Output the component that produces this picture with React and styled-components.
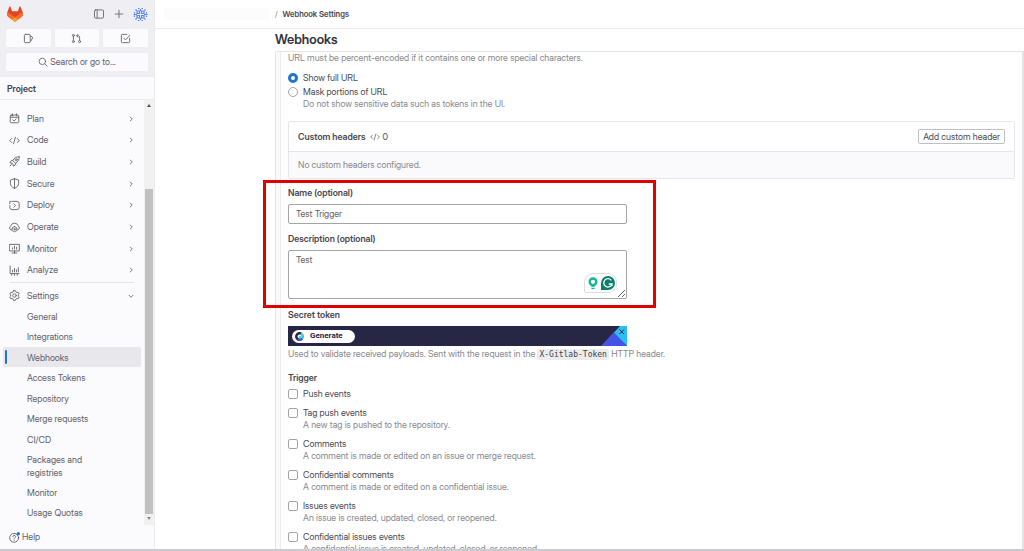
import React, { useState } from 'react'
import styled, { createGlobalStyle } from 'styled-components'

const GlobalStyle = createGlobalStyle`
  *, *::before, *::after { box-sizing: border-box; }
  body {
    margin: 0;
    background: #fff;
    color: #4a494f;
    font-family: 'Inter Display', Roboto, 'Liberation Sans', sans-serif;
    font-size: 9px;
    line-height: 12px;
  }
  button, input, textarea { font: inherit; color: inherit; }
  h1, h2, ul, p, fieldset { margin: 0; padding: 0; border: 0; }
  ul { list-style: none; }
  a { color: inherit; text-decoration: none; }
`

const Page = styled.div`
  display: flex;
  height: 100vh;
  overflow: hidden;
  border-bottom: 2px solid #c9cbd1;
`

/* sidebar */
const Sidebar = styled.aside`
  display: flex;
  flex-direction: column;
  flex: 0 0 155px;
  background: #fbfafd;
  border-right: 1px solid #ececef;
  color: #626168;
`
const SidebarTop = styled.div`
  display: flex;
  flex-direction: column;
  gap: 6px;
  padding: 5px 6px 6px;
  background: #efeef2;
`
const BrandRow = styled.div`
  display: flex;
  align-items: center;
  gap: 8px;
  height: 18px;
  a { display: flex; margin-right: auto; padding-left: 1px; }
`
const IconButton = styled.button`
  display: flex;
  padding: 0;
  border: 0;
  background: none;
  color: #737278;
`
const Shortcuts = styled.div`
  display: grid;
  grid-template-columns: repeat(3, 1fr);
  gap: 4px;
`
const SoftButton = styled.button`
  display: flex;
  align-items: center;
  justify-content: center;
  gap: 2px;
  height: 18px;
  padding: 0;
  border: 0;
  border-radius: 2px;
  background: #fbfafd;
  color: #626168;
`
const ProjectTitle = styled.h2`
  padding: 6px 7px 4px;
  border-bottom: 1px solid #ececef;
  font-size: 9px;
  font-weight: 600;
  line-height: 12px;
  color: #434248;
`
const NavScroll = styled.div`
  display: flex;
  flex: 1;
  min-height: 0;
`
const Nav = styled.nav`
  display: flex;
  flex-direction: column;
  flex: 1;
  padding: 8px 3px 2px 2px;
`
const Menu = styled.ul`
  display: flex;
  flex-direction: column;
  justify-content: space-between;
  height: 173px;
`
const MenuLink = styled.a`
  display: flex;
  align-items: center;
  gap: 7px;
  height: 21px;
  padding: 0 6px 0 7px;
  span { flex: 1; }
`
const Divider = styled.hr`
  width: calc(100% - 15px);
  margin: 1px auto 2px;
  border: 0;
  border-top: 1px solid #e4e3e8;
`
const SubMenu = styled.ul`
  display: flex;
  flex-direction: column;
  flex: 1;
  justify-content: space-between;
`
const SubLink = styled.a`
  display: flex;
  align-items: center;
  gap: 20px;
  min-height: 20px;
  padding: 3px 30px 3px 2px;
  margin-left: 1px;
  border-radius: 2px;
  background: ${(p) => (p.$active ? '#e8e7ec' : 'transparent')};
  line-height: 13px;
  &::before {
    content: '';
    flex: 0 0 2px;
    height: 14px;
    border-radius: 1px;
    background: ${(p) => (p.$active ? '#1f75cb' : 'transparent')};
  }
`
const Scrollbar = styled.div`
  display: flex;
  flex-direction: column;
  align-items: center;
  flex: 0 0 10px;
  padding: 4px 0 5px;
  background: #f1f1f1;
`
const Arrow = styled.i`
  border: 2px solid transparent;
  border-width: ${(p) => (p.$down ? '3px 2px 0' : '0 2px 3px')};
  border-top-color: ${(p) => (p.$down ? '#8a8a8a' : 'transparent')};
  border-bottom-color: ${(p) => (p.$down ? 'transparent' : '#505050')};
`
const Thumb = styled.div`
  flex: 1;
  width: 8px;
  margin: 82px 0 3px;
  background: #c1c1c1;
`
const HelpLink = styled.a`
  display: flex;
  align-items: center;
  gap: 2px;
  height: 24px;
  padding-left: 9px;
`

/* main column */
const Main = styled.main`
  display: flex;
  flex-direction: column;
  flex: 1;
  min-width: 0;
`
const TopBar = styled.div`
  display: flex;
  align-items: center;
  flex: 0 0 29px;
  gap: 5px;
  padding-left: 9px;
  border-bottom: 1px solid #ececef;
  font-size: 8px;
`
const HiddenCrumb = styled.span`
  width: 106px;
  height: 12px;
  background: #fcfcfc;
`
const CrumbSlash = styled.span`
  color: #89888d;
`
const Crumb = styled.a`
  font-weight: 600;
`
const Content = styled.div`
  display: flex;
  flex-direction: column;
  flex: 1;
  min-height: 0;
  margin-left: 120px;
`
const Title = styled.h1`
  padding: 2px 0 4px;
  font-size: 13px;
  font-weight: 600;
  line-height: 16px;
  color: #333238;
`
const Panel = styled.div`
  flex: 1;
  min-height: 0;
  padding-left: 4px;
  border: 1px solid #e4e4e8;
  border-width: 1px 2px 0 1px;
  border-radius: 2px 0 0 0;
  background: #fafafc;
`
const Form = styled.form`
  padding: 0 7px;
  border-left: 1px solid #ececef;
  background: #fff;
`
const HelpText = styled.p`
  color: #89888d;
`
const Choices = styled.div`
  display: flex;
  flex-direction: column;
  gap: ${(p) => p.$gap};
  margin-top: ${(p) => p.$top || '0'};
`
const Choice = styled.div`
  display: grid;
  grid-template-columns: 10px 1fr;
  column-gap: 5px;
  align-items: center;
  ${HelpText} { grid-column: 2; }
`
const Radio = styled.input`
  appearance: none;
  width: 10px;
  height: 10px;
  margin: 0;
  border: 1px solid #a4a3a8;
  border-radius: 50%;
  &:checked { border: 3px solid #1f75cb; }
`
const Checkbox = styled.input`
  appearance: none;
  width: 10px;
  height: 10px;
  margin: 0;
  border: 1px solid #a4a3a8;
  border-radius: 2px;
  &:checked { background: #1f75cb; border-color: #1f75cb; }
`
const Card = styled.section`
  margin: 11px 0 8px;
  border: 1px solid #e6e6ea;
  border-radius: 2px;
`
const CardHeader = styled.div`
  display: flex;
  align-items: center;
  height: 30px;
  padding: 0 9px;
  border-bottom: 1px solid #e6e6ea;
  h2 { margin-right: 5px; font-size: 9px; font-weight: 600; line-height: 12px; }
  svg { margin-right: 2px; color: #737278; }
`
const OutlineButton = styled.button`
  height: 15px;
  margin-left: auto;
  padding: 0 4px;
  border: 1px solid #bfbfc3;
  border-radius: 2px;
  background: #fff;
  line-height: 12px;
`
const CardBody = styled.div`
  padding: 7px 9px;
  background: #fafafc;
  color: #89888d;
`
const Highlight = styled.div`
  position: relative;
  &::after {
    content: '';
    position: absolute;
    inset: -7px auto -9px -25px;
    width: 393px;
    border: 3px solid #e00000;
    pointer-events: none;
  }
`
const Label = styled.label`
  display: block;
  margin-bottom: 5px;
  font-weight: 600;
`
const Field = styled.div`
  position: relative;
  max-width: 339px;
`
const TextInput = styled.input`
  display: block;
  width: 100%;
  height: 20px;
  margin-bottom: 9px;
  padding: 0 7px 1px;
  border: 1px solid #a4a3a8;
  border-radius: 2px;
  background: #fff;
  color: #626168;
`
const TextArea = styled.textarea`
  display: block;
  width: 100%;
  height: 49px;
  padding: 3px 7px;
  border: 1px solid #a4a3a8;
  border-radius: 2px;
  background: #fff;
  color: #626168;
  resize: vertical;
`
const Badge = styled.div`
  position: absolute;
  right: 10px;
  bottom: 6px;
  display: flex;
  align-items: center;
  gap: 3px;
  padding: 2px 1px 2px 3px;
  border: 1px solid #dcdde3;
  border-radius: 9px 9px 9px 2px;
  background: #fff;
`
const Subtitle = styled.h2`
  margin: 10px 0 5px;
  font-size: 9px;
  font-weight: 600;
  line-height: 12px;
`
const TokenBar = styled.div`
  display: flex;
  align-items: center;
  max-width: 339px;
  height: 20px;
  margin-bottom: 2px;
  padding-left: 4px;
  background: #282645;
  > svg { margin-left: auto; }
`
const GenerateButton = styled.button`
  display: flex;
  align-items: center;
  gap: 6px;
  height: 13px;
  padding: 0 12px 0 3px;
  border: 0;
  border-radius: 7px;
  background: #fff;
  color: #282645;
  font-family: Roboto, sans-serif;
  font-size: 8px;
  font-weight: 700;
`
const Code = styled.code`
  padding: 1px 2px;
  border-radius: 2px;
  background: #ececef;
  color: #434248;
  font-family: 'DejaVu Sans Mono', monospace;
  font-size: 8px;
`
const TriggerSet = styled.fieldset`
  margin-top: 11px;
`
const GroupTitle = styled.legend`
  padding: 0 0 4px;
  font-weight: 600;
`

const Icon = ({ size = 11, children, ...rest }) => (
  <svg width={size} height={size} viewBox="0 0 16 16" fill="none" stroke="currentColor"
    strokeWidth="1.3" strokeLinecap="round" strokeLinejoin="round" aria-hidden="true" {...rest}>
    {children}
  </svg>
)

const icons = {
  plan: <><rect x="1.8" y="3" width="12.4" height="11.2" rx="1.5" /><path d="M2 6.2h12M5 1.2v3M11 1.2v3M5.6 10l1.8 1.6 3-3" /></>,
  code: <path d="M4 5 1 8l3 3M12 5l3 3-3 3M9.4 3.2 6.6 12.8" />,
  build: <><path d="M14.8 1.2c-4.6-.2-7 1.3-9.4 5.4L3 7l-1.6 3 3 .4 1.4 1.4.4 3L9 13.2l.6-2.6c4-2.6 5.4-5 5.2-9.4ZM1.4 14.6l2.2-2.2M5.4 6.6l4.2 4" /><circle cx="10.6" cy="5.4" r="1.5" /></>,
  secure: <path d="M8 .8v14.4M8 1 2 3v4.6c0 3.6 2.4 6 6 7.4 3.6-1.4 6-3.8 6-7.4V3L8 1Z" />,
  deploy: <path d="M5 2h6.5A3.3 3.3 0 0 1 14.8 5.3v5.4a3.3 3.3 0 0 1-3.3 3.3H4.5A3.3 3.3 0 0 1 1.2 10.7V8.5M1.2 5.5V2h2M7 5.5 9.5 8 7 10.5" />,
  operate: <><path d="M3.6 11.6A3.2 3.2 0 0 1 2.6 5.6 5.6 5.6 0 0 1 13.3 5.6 3.2 3.2 0 0 1 12.5 11.6" /><path d="m8 6.6 3.4 1.9v3.8L8 14.3l-3.4-2V8.5L8 6.6Z" /><circle cx="8" cy="10.4" r="1" /></>,
  monitor: <path d="M1 2h14v9.5H1zM4.6 14.5h6.8M8 11.500v3M5 8.800V7M8 8.800V4.600M11 8.800V6" />,
  analyze: <path d="M1.700 1.500v11h13M5.200 10V7.500M8 10V5M10.800 10V7M13.600 10V4M4 15v-2M8 15v-2M12 15v-2" />,
  settings: <><path d="m6.6 1-.5 1.7-1.7 1-1.8-.4-1.5 2.5L2.4 7v2l-1.3 1.2 1.5 2.5 1.8-.4 1.7 1 .5 1.7h2.800l.5-1.700 1.700-1 1.800.4 1.500-2.500L13.600 9V7l1.300-1.200-1.500-2.500-1.800.4-1.700-1L9.400 1H6.600Z" /><circle cx="8" cy="8" r="2.6" /></>,
}

const Chevron = ({ down }) => (
  <Icon size={8} strokeWidth="1.7">
    <path d={down ? 'm4 6.5 4 4 4-4' : 'm6.5 4 4 4-4 4'} />
  </Icon>
)

const Tanuki = () => (
  <svg width="16" height="16" viewBox="0 0 25 24" aria-hidden="true">
    <path fill="#E24329" d="m24.507 9.5-.034-.09L21.082.562a.896.896 0 0 0-1.694.091l-2.29 7.01H7.825L5.535.653a.898.898 0 0 0-1.694-.09L.451 9.411.416 9.5a6.297 6.297 0 0 0 2.09 7.278l.012.01.03.022 5.16 3.867 2.56 1.935 1.554 1.176a1.051 1.051 0 0 0 1.268 0l1.555-1.176 2.56-1.935 5.197-3.89.014-.01A6.297 6.297 0 0 0 24.507 9.5Z" />
    <path fill="#FC6D26" d="m24.507 9.5-.034-.09a11.44 11.44 0 0 0-4.56 2.051l-7.447 5.632 4.742 3.584 5.197-3.89.014-.01A6.297 6.297 0 0 0 24.507 9.5ZM5.01 11.461a11.43 11.43 0 0 0-4.56-2.05L.416 9.5a6.297 6.297 0 0 0 2.09 7.278l.012.01.03.022 5.16 3.867 4.745-3.584-7.444-5.632Z" />
    <path fill="#FCA326" d="m7.707 20.677 2.56 1.935 1.555 1.176a1.051 1.051 0 0 0 1.268 0l1.555-1.176 2.56-1.935-4.743-3.584-4.755 3.584Z" />
  </svg>
)

const Identicon = () => (
  <svg width="15" height="15" viewBox="0 0 15 15" aria-hidden="true">
    <circle cx="7.5" cy="7.5" r="7.5" fill="#f0f2fb" />
    <path fill="none" stroke="#5b84ee" strokeWidth="1.2" d="M4 4h2.500v2.500H4zM8.500 4H11v2.500H8.500zM4 8.500h2.500V11H4zM8.500 8.500H11V11H8.500zM5 1.500h1.500M8.500 1.500H10M5 13.500h1.500M8.500 13.500H10M1.500 5v1.500M1.500 8.500V10M13.500 5v1.500M13.500 8.500V10M2.500 3.500l1-1M11.500 2.500l1 1M2.500 11.500l1 1M12.500 11.500l-1 1M.5 7.500H4M11 7.500h3.500M7.500 2v2M7.500 11v2" />
  </svg>
)

const menu = [
  ['Plan', 'plan'],
  ['Code', 'code'],
  ['Build', 'build'],
  ['Secure', 'secure'],
  ['Deploy', 'deploy'],
  ['Operate', 'operate'],
  ['Monitor', 'monitor'],
  ['Analyze', 'analyze'],
]

const settings = ['General', 'Integrations', 'Webhooks', 'Access Tokens', 'Repository',
  'Merge requests', 'CI/CD', 'Packages and registries', 'Monitor', 'Usage Quotas']

const triggers = [
  { id: 'push', name: 'Push events' },
  { id: 'tag', name: 'Tag push events', help: 'A new tag is pushed to the repository.' },
  { id: 'comments', name: 'Comments', help: 'A comment is made or edited on an issue or merge request.' },
  { id: 'conf-comments', name: 'Confidential comments', help: 'A comment is made or edited on a confidential issue.' },
  { id: 'issues', name: 'Issues events', help: 'An issue is created, updated, closed, or reopened.' },
  { id: 'conf-issues', name: 'Confidential issues events', help: 'A confidential issue is created, updated, closed, or reopened.' },
]

const SideNav = () => (
  <Sidebar>
    <SidebarTop>
      <BrandRow>
        <a href="#home" aria-label="Homepage"><Tanuki /></a>
        <IconButton aria-label="Toggle sidebar">
          <Icon size={12}><rect x="2" y="2.5" width="12" height="11" rx="1.5" /><path d="M5.5 2.5v11" /></Icon>
        </IconButton>
        <IconButton aria-label="Create new">
          <Icon size={12}><path d="M8 3v10M3 8h10" /></Icon>
        </IconButton>
        <IconButton aria-label="User menu"><Identicon /></IconButton>
      </BrandRow>
      <Shortcuts>
        <SoftButton aria-label="Issues">
          <Icon><path d="M3.500 2H9a1.500 1.500 0 0 1 1.500 1.500v9A1.500 1.500 0 0 1 9 14H3.500A1.500 1.500 0 0 1 2 12.500v-9A1.500 1.500 0 0 1 3.500 2ZM10.800 4.500l2.500 1c.7.3 1 1 .7 1.700l-2.800 4.800" /></Icon>
        </SoftButton>
        <SoftButton aria-label="Merge requests">
          <Icon><circle cx="3.5" cy="3.5" r="1.5" /><circle cx="3.5" cy="12.5" r="1.5" /><circle cx="12.5" cy="12.5" r="1.5" /><path d="M3.500 5v6M12.500 11V6a2 2 0 0 0-2-2H8.500M10.200 2 8.200 4l2 2" /></Icon>
        </SoftButton>
        <SoftButton aria-label="To-Do List">
          <Icon><path d="M14 8v4.500a1.500 1.500 0 0 1-1.500 1.500h-9A1.500 1.500 0 0 1 2 12.500v-9A1.500 1.500 0 0 1 3.500 2H10M5.500 7.500 8 10l6.300-6.500" /></Icon>
        </SoftButton>
      </Shortcuts>
      <SoftButton>
        <Icon size={10}><circle cx="7" cy="7" r="5.2" /><path d="m11 11 3.800 3.800" /></Icon>
        Search or go to...
      </SoftButton>
    </SidebarTop>
    <ProjectTitle>Project</ProjectTitle>
    <NavScroll>
      <Nav>
        <Menu>
          {menu.map(([name, icon]) => (
            <li key={name}>
              <MenuLink href="#menu">
                <Icon>{icons[icon]}</Icon>
                <span>{name}</span>
                <Chevron />
              </MenuLink>
            </li>
          ))}
        </Menu>
        <Divider />
        <MenuLink href="#settings">
          <Icon>{icons.settings}</Icon>
          <span>Settings</span>
          <Chevron down />
        </MenuLink>
        <SubMenu>
          {settings.map((name) => (
            <li key={name}>
              <SubLink href="#sub" $active={name === 'Webhooks'}>{name}</SubLink>
            </li>
          ))}
        </SubMenu>
      </Nav>
      <Scrollbar>
        <Arrow />
        <Thumb />
        <Arrow $down />
      </Scrollbar>
    </NavScroll>
    <HelpLink href="#help">
      <Icon>
        <circle cx="7.5" cy="8.5" r="6.5" />
        <path d="M5.600 6.800a2 2 0 1 1 2.800 1.900c-.6.300-.9.600-.9 1.300M7.500 12v.100" />
        <circle cx="13.5" cy="2.5" r="2.4" fill="#1f75cb" stroke="none" />
      </Icon>
      Help
    </HelpLink>
  </Sidebar>
)

const App = () => {
  const [urlMode, setUrlMode] = useState('full')
  const [name, setName] = useState('Test Trigger')
  const [description, setDescription] = useState('Test')

  return (
    <>
      <GlobalStyle />
      <Page>
        <SideNav />
        <Main>
          <TopBar>
            <HiddenCrumb />
            <CrumbSlash>/</CrumbSlash>
            <Crumb href="#webhook">Webhook Settings</Crumb>
          </TopBar>
          <Content>
            <Title>Webhooks</Title>
            <Panel>
              <Form onSubmit={(e) => e.preventDefault()}>
                <HelpText>URL must be percent-encoded if it contains one or more special characters.</HelpText>
                <Choices $gap="2px" $top="8px">
                  <Choice>
                    <Radio type="radio" id="full" name="url" checked={urlMode === 'full'} onChange={() => setUrlMode('full')} />
                    <label htmlFor="full">Show full URL</label>
                  </Choice>
                  <Choice>
                    <Radio type="radio" id="mask" name="url" checked={urlMode === 'mask'} onChange={() => setUrlMode('mask')} />
                    <label htmlFor="mask">Mask portions of URL</label>
                    <HelpText>Do not show sensitive data such as tokens in the UI.</HelpText>
                  </Choice>
                </Choices>

                <Card>
                  <CardHeader>
                    <h2>Custom headers</h2>
                    <Icon size={10}>{icons.code}</Icon>
                    <span>0</span>
                    <OutlineButton type="button">Add custom header</OutlineButton>
                  </CardHeader>
                  <CardBody>No custom headers configured.</CardBody>
                </Card>

                <Highlight>
                  <Label htmlFor="name">Name (optional)</Label>
                  <Field>
                    <TextInput id="name" type="text" value={name} onChange={(e) => setName(e.target.value)} />
                  </Field>
                  <Label htmlFor="description">Description (optional)</Label>
                  <Field>
                    <TextArea id="description" spellCheck="false" value={description} onChange={(e) => setDescription(e.target.value)} />
                    <Badge>
                      <svg width="10" height="13" viewBox="0 0 10 13" aria-hidden="true">
                        <circle cx="5" cy="4.8" r="3.3" fill="none" stroke="#12b795" strokeWidth="2.4" />
                        <path fill="#12b795" d="M3.200 7.500h3.600v2.300H3.200zM3.200 10.800h3.600a1.800 1.500 0 0 1-3.600 0Z" />
                      </svg>
                      <svg width="14" height="14" viewBox="0 0 14 14" aria-hidden="true">
                        <path fill="#0b7f6c" d="M7 0a7 7 0 1 1 0 14H0V7a7 7 0 0 1 7-7Z" />
                        <path fill="none" stroke="#fff" strokeWidth="1.3" d="M10.300 4.300A4.200 4.200 0 1 0 11 8H7.800M11 7.500v2.600" />
                      </svg>
                    </Badge>
                  </Field>
                </Highlight>

                <Subtitle>Secret token</Subtitle>
                <TokenBar>
                  <GenerateButton type="button">
                    <svg width="9" height="9" viewBox="0 0 9 9" aria-hidden="true">
                      <g fill="none" strokeWidth="2.5">
                        <path stroke="#282645" d="M6.200 1.700A3.250 3.250 0 1 0 4.500 7.750" />
                        <path stroke="#3f54e8" d="M3 7.400a3.250 3.250 0 0 0 4.200-1.100" />
                        <path stroke="#2fc4f5" d="M7.200 6.300a3.250 3.250 0 0 0-1-4.600" />
                      </g>
                      <circle cx="5.2" cy="5.2" r="1.3" fill="#3be08f" />
                    </svg>
                    Generate
                  </GenerateButton>
                  <svg width="26" height="20" viewBox="0 0 26 20" aria-hidden="true">
                    <path fill="#4353e6" d="M0 20 13 6l13 14Z" />
                    <path fill="#2cbcf8" d="M19 0h7v20L13 6.500Z" />
                    <path stroke="#282645" d="m18.500 3.500 4.500 4.500M23 3.500 18.500 8" />
                  </svg>
                </TokenBar>
                <HelpText>
                  Used to validate received payloads. Sent with the request in the <Code>X-Gitlab-Token</Code> HTTP header.
                </HelpText>

                <TriggerSet>
                  <GroupTitle>Trigger</GroupTitle>
                  <Choices $gap="7px">
                    {triggers.map((t) => (
                      <Choice key={t.id}>
                        <Checkbox type="checkbox" id={t.id} />
                        <label htmlFor={t.id}>{t.name}</label>
                        {t.help && <HelpText>{t.help}</HelpText>}
                      </Choice>
                    ))}
                  </Choices>
                </TriggerSet>
              </Form>
            </Panel>
          </Content>
        </Main>
      </Page>
    </>
  )
}

export default App
